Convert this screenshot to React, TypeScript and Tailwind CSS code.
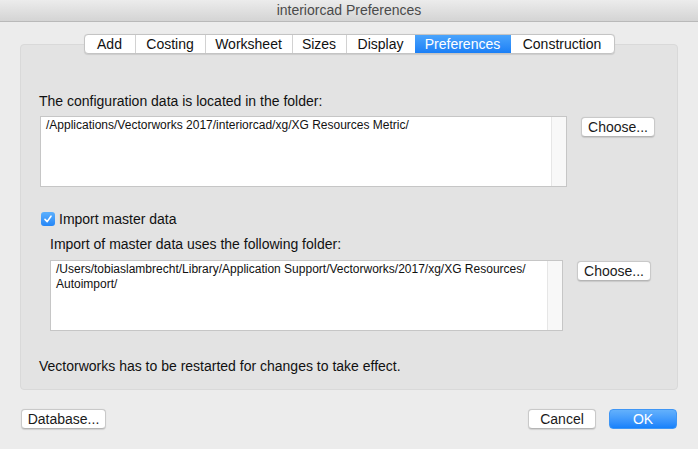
const tabs = [
  { label: "Add", w: "w-[50px]" },
  { label: "Costing", w: "w-[70px]" },
  { label: "Worksheet", w: "w-[87px]" },
  { label: "Sizes", w: "w-[54px]" },
  { label: "Display", w: "w-[69px]" },
  { label: "Preferences", w: "w-[96px]", active: true },
  { label: "Construction", w: "w-[103px]" },
];

function PushButton({ children, className = "" }: { children: React.ReactNode; className?: string }) {
  return (
    <div
      className={`h-[20px] flex items-center justify-center rounded-[4px] bg-white border border-[#c9c9c9] border-b-[#b5b5b5] shadow-[0_0.5px_1px_rgba(0,0,0,0.12)] text-[14px] text-[#1a1a1a] ${className}`}
    >
      {children}
    </div>
  );
}

function PathField({ className = "", children }: { className?: string; children: React.ReactNode }) {
  return (
    <div className={`h-[71px] flex bg-white border border-[#c6c6c6] ${className}`}>
      <div className="flex-1 pl-[5px] pt-[1px] text-[12px] leading-[15px] text-[#111]">{children}</div>
      <div className="w-[15px] bg-[#f8f8f8] border-l border-[#e6e6e6]" />
    </div>
  );
}

export default function App() {
  return (
    <div className="w-[698px] h-[449px] bg-[#ececec] flex flex-col font-['Liberation_Sans',Arial,sans-serif] text-[14px] text-[#111] overflow-hidden">
      {/* Title bar */}
      <div className="h-[22px] flex items-center justify-center bg-gradient-to-b from-[#ececec] to-[#d4d4d4] border-b border-[#b9b9b9] text-[14px] text-[#4a4a4a]">
        interiorcad Preferences
      </div>

      <div className="px-[20px] pt-[12px] flex flex-col">
        {/* Tabs */}
        <div className="relative z-10 flex justify-center">
          <div className="flex h-[20px] rounded-[4px] bg-white border border-[#c4c4c4] shadow-[0_0.5px_1px_rgba(0,0,0,0.1)] overflow-hidden">
            {tabs.map((t, i) =>
              t.active ? (
                <div
                  key={t.label}
                  className={`${t.w} flex items-center justify-center bg-gradient-to-b from-[#4aa4fc] to-[#1a7ff6] text-white`}
                >
                  {t.label}
                </div>
              ) : (
                <div
                  key={t.label}
                  className={`${t.w} flex items-center justify-center ${i > 0 && !tabs[i - 1].active ? "border-l border-[#d2d2d2]" : ""}`}
                >
                  {t.label}
                </div>
              )
            )}
          </div>
        </div>

        {/* Group box */}
        <div className="-mt-[10px] h-[346px] rounded-[4px] bg-[#e3e3e3] border border-[#d9d9d9] flex flex-col">
          <div className="mt-[48px] ml-[18px] leading-[16px]">The configuration data is located in the folder:</div>
          <div className="mt-[7px] flex items-start">
            <PathField className="ml-[19px] w-[527px]">
              /Applications/Vectorworks 2017/interiorcad/xg/XG Resources Metric/
            </PathField>
            <PushButton className="ml-[14px] mt-[1px] w-[74px]">Choose...</PushButton>
          </div>

          <div className="mt-[24px] ml-[20px] flex items-center">
            <div className="w-[14px] h-[14px] rounded-[3px] bg-gradient-to-b from-[#5cb0fd] to-[#2386f7] flex items-center justify-center">
              <svg width="10" height="10" viewBox="0 0 10 10">
                <path d="M2 5.4 L4.2 7.6 L8 2.2" fill="none" stroke="white" strokeWidth="1.6" strokeLinecap="round" strokeLinejoin="round" />
              </svg>
            </div>
            <span className="ml-[4px] leading-[16px]">Import master data</span>
          </div>

          <div className="mt-[9px] ml-[29px] leading-[16px]">Import of master data uses the following folder:</div>
          <div className="mt-[8px] flex items-start">
            <PathField className="ml-[29px] w-[513px]">
              /Users/tobiaslambrecht/Library/Application Support/Vectorworks/2017/xg/XG Resources/
              <br />
              Autoimport/
            </PathField>
            <PushButton className="ml-[14px] mt-[1px] w-[74px]">Choose...</PushButton>
          </div>

          <div className="mt-[27px] ml-[18px] leading-[16px]">Vectorworks has to be restarted for changes to take effect.</div>
        </div>
      </div>

      {/* Footer buttons */}
      <div className="mt-[19px] px-[21px] flex items-center">
        <PushButton className="w-[85px]">Database...</PushButton>
        <div className="flex-1" />
        <PushButton className="w-[68px]">Cancel</PushButton>
        <div className="ml-[13px] w-[68px] h-[20px] flex items-center justify-center rounded-[4px] bg-gradient-to-b from-[#63b1fc] to-[#1581fb] border border-[#3f96f5] text-white text-[14px]">
          OK
        </div>
      </div>
    </div>
  );
}
